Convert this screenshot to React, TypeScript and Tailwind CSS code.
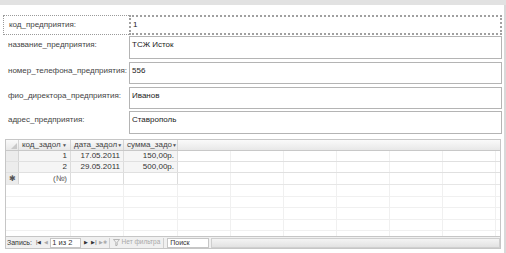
const fields: [string, string, string][] = [
  ['код_предприятия:', '1', 'h-[20px]'],
  ['название_предприятия:', 'ТСЖ Исток', 'h-[23px] mt-[1px]'],
  ['номер_телефона_предприятия:', '556', 'h-[22px] mt-[3px]'],
  ['фио_директора_предприятия:', 'Иванов', 'h-[22px] mt-[3px]'],
  ['адрес_предприятия:', 'Ставрополь', 'h-[23px] mt-[2px]'],
];

const rows = [
  { id: '1', date: '17.05.2011', sum: '150,00р.' },
  { id: '2', date: '29.05.2011', sum: '500,00р.' },
];

const colW = ['w-[52px]', 'w-[53px]', 'w-[54px]'];
const fillers = [0, 1, 2, 3, 4, 5];

const HeaderCell = ({ text, w }: { text: string; w: string }) => (
  <div className={`${w} shrink-0 h-full flex items-center pl-[3px] pr-[3px] border-r border-[#d4d4d4] overflow-hidden`}>
    <span className="flex-1 whitespace-nowrap">{text}</span>
    <span className="text-[5px] text-[#555]">▼</span>
  </div>
);

const Fillers = () => (
  <>
    {fillers.map((i) => (
      <div key={i} className="w-[53px] shrink-0 h-full border-r border-[#f0f0f0]" />
    ))}
  </>
);

export default function App() {
  return (
    <div className="w-[506px] h-[253px] bg-white overflow-hidden relative font-['Liberation_Sans',sans-serif] text-[8px] text-[#444] leading-none">
      <div className="h-[5px] bg-[#e2e2e2]" />

      <div className="pl-[3px] pr-[2px] pt-[10px] border-r-2 border-[#d9d9d9] h-[248px]">
        {fields.map(([label, value, rowCls], i) => (
          <div key={label} className={`flex ${rowCls}`}>
            <div
              className={`w-[126px] shrink-0 pl-[5px] ${
                i === 0 ? 'pt-[5px] border border-dotted border-[#9a9a9a] border-r-0' : 'pt-[5px]'
              }`}
            >
              {label}
            </div>
            <div
              className={`flex-1 pl-[2px] pt-[4px] text-[#222] ${
                i === 0 ? 'border-2 border-dotted border-[#a0a0a0] bg-white' : 'border border-[#b4b4b4]'
              }`}
            >
              {value}
            </div>
          </div>
        ))}

        {/* subform datasheet */}
        <div className="mt-[5px] ml-[2px] mr-[1px] h-[110px] border border-[#c6c6c6] flex flex-col text-[#333]">
          <div className="flex-1 overflow-hidden flex flex-col">
            <div className="h-[11px] flex shrink-0 bg-gradient-to-b from-[#fafafa] to-[#e8e8e8] border-b border-[#c8c8c8] text-[#444]">
              <div className="w-[13px] shrink-0 h-full border-r border-[#d4d4d4] relative">
                <div className="absolute right-[1px] bottom-[1px] w-0 h-0 border-l-[6px] border-l-transparent border-b-[6px] border-b-[#c9c9c9]" />
              </div>
              <HeaderCell text="код_задол" w={colW[0]} />
              <HeaderCell text="дата_задол" w={colW[1]} />
              <HeaderCell text="сумма_задо" w={colW[2]} />
              <div className="flex-1" />
            </div>

            {rows.map((r) => (
              <div key={r.id} className="h-[11px] flex shrink-0 border-b border-[#e0e0e0]">
                <div className="w-[13px] shrink-0 h-full bg-[#ececec] border-r border-[#d4d4d4]" />
                <div className={`${colW[0]} shrink-0 flex items-center justify-end pr-[3px] border-r border-[#dcdcdc] bg-[#f5f5f5]`}>
                  {r.id}
                </div>
                <div className={`${colW[1]} shrink-0 flex items-center justify-end pr-[3px] border-r border-[#dcdcdc] bg-[#f5f5f5]`}>
                  {r.date}
                </div>
                <div className={`${colW[2]} shrink-0 flex items-center justify-end pr-[3px] border-r border-[#dcdcdc] bg-[#f5f5f5]`}>
                  {r.sum}
                </div>
                <Fillers />
              </div>
            ))}

            <div className="h-[12px] flex shrink-0 border-b border-[#e6e6e6]">
              <div className="w-[13px] shrink-0 h-full bg-[#ececec] border-r border-[#d4d4d4] flex items-center justify-center text-[8px] text-[#555]">
                ✱
              </div>
              <div className={`${colW[0]} shrink-0 flex items-center justify-end pr-[3px] border-r border-[#dcdcdc] text-[#555]`}>
                (№)
              </div>
              <div className={`${colW[1]} shrink-0 border-r border-[#dcdcdc]`} />
              <div className={`${colW[2]} shrink-0 border-r border-[#dcdcdc]`} />
              <Fillers />
            </div>

            {[0, 1, 2, 3, 4].map((k) => (
              <div key={k} className="h-[11.5px] flex shrink-0 border-b border-[#f0f0f0]">
                <div className="w-[13px] shrink-0" />
                <div className={`${colW[0]} shrink-0 border-r border-[#f0f0f0]`} />
                <div className={`${colW[1]} shrink-0 border-r border-[#f0f0f0]`} />
                <div className={`${colW[2]} shrink-0 border-r border-[#f0f0f0]`} />
                <Fillers />
              </div>
            ))}
          </div>

          {/* record navigation bar */}
          <div className="h-[12px] shrink-0 flex items-center bg-[#f0f0f0] border-t border-[#c6c6c6] text-[7px] text-[#333]">
            <span className="pl-[1px] pr-[3px]">Запись:</span>
            <span className="text-[5px] text-[#333] px-[1px]">|◀</span>
            <span className="text-[5px] text-[#aaa] px-[2px]">◀</span>
            <span className="h-[10px] w-[31px] bg-white border border-[#c6c6c6] flex items-center pl-[1px] text-[7.5px]">1 из 2</span>
            <span className="text-[5px] text-[#333] pl-[3px] pr-[2px]">▶</span>
            <span className="text-[5px] text-[#333] px-[1px]">▶|</span>
            <span className="text-[5px] text-[#aaa] px-[1px]">▶✱</span>
            <span className="h-[10px] flex items-center gap-[2px] px-[3px] ml-[1px] text-[#a8a8a8] border-l border-r border-[#cfcfcf] text-[6.5px]">
              <svg width="7" height="7" viewBox="0 0 7 7">
                <path d="M0.5 0.5h6l-2.3 2.8v2.9l-1.4 0.6v-3.5z" fill="none" stroke="#a8a8a8" strokeWidth="0.8" />
              </svg>
              Нет фильтра
            </span>
            <span className="h-[10px] w-[42px] ml-[3px] bg-white border border-[#c6c6c6] flex items-center pl-[2px] text-[7px]">Поиск</span>
            <div className="flex-1 h-[10px] ml-[2px] bg-gradient-to-b from-[#f4f4f4] to-[#e2e2e2] border border-[#cfcfcf]" />
          </div>
        </div>
      </div>
    </div>
  );
}
